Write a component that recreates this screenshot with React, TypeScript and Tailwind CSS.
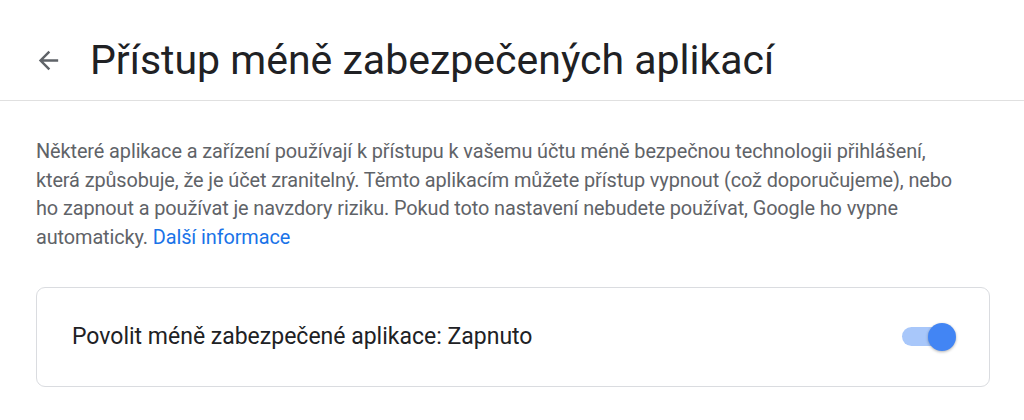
export default function App() {
  return (
    <div className="w-[1024px] h-[420px] bg-white overflow-hidden" style={{ fontFamily: "Roboto, 'Noto Sans', sans-serif" }}>
      <header className="h-[101px] flex items-center border-b border-[#e0e0e0] pl-[34px] pt-[20px]">
        <svg width="29" height="29" viewBox="0 0 24 24" className="text-[#5f6368] mr-[27px]">
          <path d="M20 11H7.83l5.59-5.59L12 4l-8 8 8 8 1.41-1.41L7.83 13H20v-2z" fill="currentColor" />
        </svg>
        <h1 className="text-[41px] leading-none text-[#202124]">Přístup méně zabezpečených aplikací</h1>
      </header>
      <main className="px-[36px]">
        <p className="mt-[37px] text-[19.9px] leading-[28.7px] text-[#5f6368] tracking-[-0.1px] whitespace-nowrap">
          Některé aplikace a zařízení používají k přístupu k vašemu účtu méně bezpečnou technologii přihlášení,
          <br />
          která způsobuje, že je účet zranitelný. Těmto aplikacím můžete přístup vypnout (což doporučujeme), nebo
          <br />
          ho zapnout a používat je navzdory riziku. Pokud toto nastavení nebudete používat, Google ho vypne
          <br />
          automaticky. <a className="text-[#1a73e8]">Další informace</a>
        </p>
        <div className="mt-[34px] w-[954px] h-[100px] border border-[#dadce0] rounded-[9px] flex items-center justify-between pl-[35px] pr-[33px]">
          <span className="text-[23px] text-[#202124]">Povolit méně zabezpečené aplikace: Zapnuto</span>
          <div className="relative w-[56px] h-[28px] flex items-center">
            <div className="absolute left-[2px] w-[46px] h-[19px] rounded-full bg-[#a8c7fa]" />
            <div className="absolute right-0 w-[28px] h-[28px] rounded-full bg-[#4285f4] shadow-[0_1px_3px_rgba(0,0,0,0.3)]" />
          </div>
        </div>
      </main>
    </div>
  );
}
